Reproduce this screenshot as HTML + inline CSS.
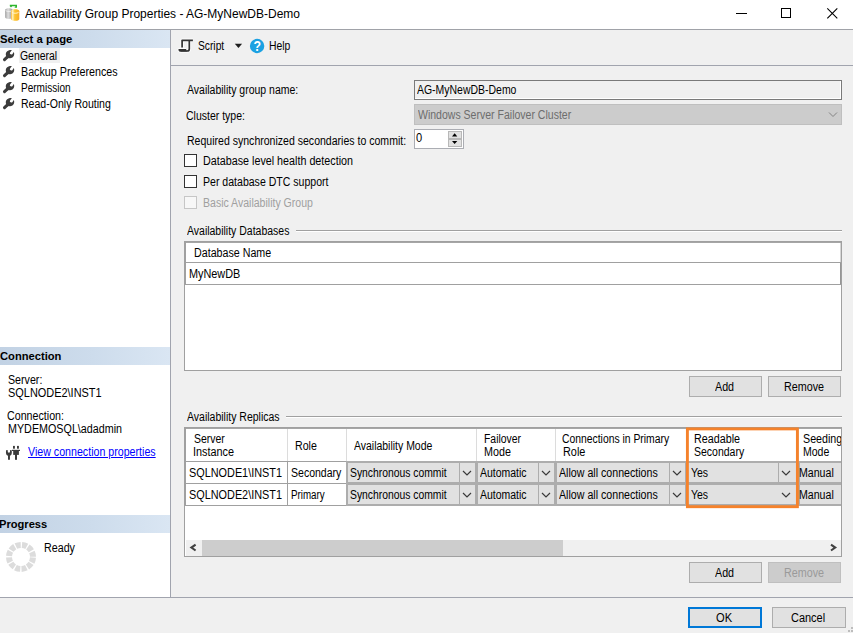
<!DOCTYPE html>
<html lang="en"><head><meta charset="utf-8"><title>Availability Group Properties - AG-MyNewDB-Demo</title>
<style>
html,body{margin:0;padding:0;}
body{width:853px;height:633px;overflow:hidden;background:#f0f0f0;font-family:"Liberation Sans",sans-serif;font-size:12px;line-height:16px;color:#000;}
#win{position:relative;width:853px;height:633px;overflow:hidden;background:#f0f0f0;}
#win div,#win span,#win svg{position:absolute;box-sizing:border-box;}
.t{white-space:pre;transform-origin:0 0;display:block;}
.clip{overflow:hidden;}
.hdr{left:0;width:170px;height:18px;background:linear-gradient(90deg,#c2d2e4 0%,#cddcec 55%,#dae6f3 100%);}
.btn{background:#e1e1e1;border:1px solid #adadad;}
.btn.dis{background:#cccccc;border-color:#bfbfbf;}
.cb{width:13px;height:13px;left:184px;background:#fff;border:1px solid #333;}
.cb.dis{background:#f7f7f7;border-color:#c6c6c6;}
.cell{background:#e1e1e1;}
.vl{width:1px;}
.hl{height:1px;}

</style></head>
<body>
<div id="win">
<!-- title bar -->
<div style="left:0;top:0;width:853px;height:29px;background:#fff"></div>
<div class="hl" style="left:0;top:29px;width:853px;background:#a0a2a8"></div>
<svg style="left:0;top:0" width="24" height="28" viewBox="0 0 24 28">
  <defs>
    <linearGradient id="gg" x1="0" x2="1" y1="0" y2="0"><stop offset="0" stop-color="#a2a2a2"/><stop offset="0.4" stop-color="#dedede"/><stop offset="0.75" stop-color="#b4b4b4"/><stop offset="1" stop-color="#a0a0a0"/></linearGradient>
    <linearGradient id="gy" x1="0" x2="1" y1="0" y2="0"><stop offset="0" stop-color="#f6b430"/><stop offset="0.2" stop-color="#fff2c0"/><stop offset="0.45" stop-color="#fdc530"/><stop offset="1" stop-color="#f8ae26"/></linearGradient>
  </defs>
  <path d="M5.1 9.8 C5.1 7.7 12.7 7.7 12.7 9.8 V17.3 C12.7 19.4 5.1 19.4 5.1 17.3 Z" fill="url(#gg)"/>
  <path d="M5.6 10.6 C7 11.8 10.8 11.8 12.2 10.6" stroke="#f4f4f4" stroke-width="0.8" fill="none"/>
  <path d="M11 11.2 C11 8.7 19.3 8.7 19.3 11.2 V18.9 C19.3 21.5 11 21.5 11 18.9 Z" fill="url(#gy)"/>
  <path d="M11.8 12.3 C13.4 13.6 17 13.6 18.6 12.3" stroke="#fff8dc" stroke-width="0.9" fill="none"/>
  <path d="M9.8 4.8 H17 V7.8 H14.4 L15.6 6.3 H12.2 L11 7.6 L9.8 6.2 Z" fill="#2db52d"/>
</svg>
<!-- window buttons -->
<svg style="left:730px;top:0" width="123" height="29" viewBox="0 0 123 29">
  <path d="M6 13.5 H17" stroke="#000" stroke-width="1" fill="none"/>
  <rect x="51.5" y="8.5" width="9" height="9" stroke="#000" stroke-width="1" fill="none"/>
  <path d="M97.3 8.3 L107.3 18.3 M107.3 8.3 L97.3 18.3" stroke="#000" stroke-width="1.1" fill="none"/>
</svg>

<!-- left panel -->
<div style="left:0;top:30px;width:170px;height:567px;background:#fff"></div>
<div class="vl" style="left:170px;top:30px;height:567px;background:#a1a4ae"></div>
<div class="hdr" style="top:30px"></div>
<div class="hdr" style="top:347px"></div>
<div class="hdr" style="top:515px"></div>
<div style="left:19px;top:48px;width:41px;height:15px;background:#f0f0f0"></div>
<svg style="left:2px;top:49px" width="14" height="62" viewBox="0 0 14 62">
  <defs><g id="wr"><path d="M2.5 10.7 L6 7.3" stroke="#3c3c3c" stroke-width="3" stroke-linecap="round" fill="none"/><path d="M4.3 7.4 C3.4 5.8 3.6 3.5 5.2 2.3 C6.6 1.2 8.4 0.9 9.9 1.1 L8.1 3.5 C7.6 4.3 7.9 5 8.6 5.3 C9.3 5.6 10.1 5.5 10.5 4.9 L11.7 3.1 C12.5 4.5 12.4 6.3 11.4 7.6 C10.3 9 8.4 9.5 6.8 8.9 L5.6 9.6 Z" fill="#3c3c3c"/></g></defs>
  <use href="#wr" y="0"/><use href="#wr" y="16"/><use href="#wr" y="32"/><use href="#wr" y="48"/>
</svg>
<!-- connection icon -->
<svg style="left:4px;top:444px" width="18" height="18" viewBox="4 444 18 18">
  <path d="M6.3 450 L7.6 449.9 L7.9 452.3 Q8.9 453.1 9.9 452.3 L10.2 449.9 L11.5 450 Q12.3 452.5 11.6 454.3 Q10.9 455.6 9.95 455.8 V459.8 H8 V455.8 Q6.9 455.6 6.2 454.3 Q5.5 452.5 6.3 450 Z" fill="#3c3c3c"/>
  <rect x="13" y="445.9" width="1.9" height="2.8" fill="#3c3c3c"/><rect x="17" y="445.9" width="1.9" height="2.8" fill="#3c3c3c"/>
  <rect x="12" y="449.8" width="8" height="1.2" fill="#3c3c3c"/>
  <rect x="13.2" y="450.5" width="5.7" height="4.4" fill="#3c3c3c"/>
  <rect x="15" y="454" width="2" height="5.8" fill="#3c3c3c"/>
</svg>
<!-- progress ring -->
<svg style="left:5px;top:541px" width="32" height="32" viewBox="5 541 32 32">
  <circle cx="21" cy="556.9" r="12" fill="none" stroke="#dcdcdc" stroke-width="6" stroke-dasharray="4.983 1.3" stroke-dashoffset="-0.65"/>
</svg>

<!-- bottom separator -->
<div class="hl" style="left:0;top:597px;width:853px;background:#a1a4ae"></div>

<!-- toolbar -->
<div class="hl" style="left:171px;top:65px;width:682px;background:#a1a4ae"></div>
<svg style="left:176px;top:36px" width="20" height="18" viewBox="176 36 20 18">
  <g fill="none" stroke-linejoin="round">
  <path d="M182.1 47.6 V40.3 H192.9 M189.3 40.3 V49 Q189.3 51 187.2 51 H181 Q179.4 51 179.2 49.8 H186" stroke="#fff" stroke-width="3.6" opacity="0.85"/>
  <path d="M182.1 47.6 V40.3 H192.9 M189.3 40.3 V49 Q189.3 51 187.2 51 H181 Q179.4 51 179.2 49.8 H186" stroke="#333" stroke-width="1.7"/>
  </g>
  <path d="M179.2 49.2 H186.2 Q186.3 51 187.6 51.4 H181 Q179.3 51.3 179.2 49.2 Z" fill="#333"/>
</svg>
<svg style="left:233px;top:42px" width="11" height="8" viewBox="233 42 11 8"><path d="M234.8 43.7 H242.1 L238.45 47.9 Z" fill="#1e1e1e"/></svg>
<svg style="left:248px;top:37px" width="18" height="18" viewBox="248 37 18 18">
  <circle cx="257.1" cy="46" r="7.2" fill="#1ba1e2"/>
  <text x="0" y="51.2" text-anchor="middle" transform="translate(257.2 0) scale(0.86 1)" font-family="Liberation Sans, sans-serif" font-weight="bold" font-size="14.4" fill="#fff">?</text>
</svg>

<!-- form controls -->
<div style="left:414px;top:80px;width:428px;height:20px;background:#f0f0f0;border:1px solid #7a7a7a;box-shadow:inset -1px -1px 0 #fff"></div>
<div style="left:414px;top:104px;width:428px;height:21px;background:#cccccc;border:1px solid #bfbfbf"></div>
<svg style="left:828px;top:111px" width="10" height="7" viewBox="0 0 10 7"><path d="M1 1.5 L5 5.5 L9 1.5" stroke="#838383" stroke-width="1" fill="none"/></svg>
<div style="left:414px;top:129px;width:50px;height:20px;background:#fff;border:1px solid #abadb3"></div>
<div style="left:448px;top:131px;width:14px;height:8px;background:#e1e1e1;border:1px solid #b8b8b8"></div>
<div style="left:448px;top:139px;width:14px;height:8px;background:#e1e1e1;border:1px solid #b8b8b8"></div>
<svg style="left:451px;top:132px" width="8" height="13" viewBox="451 132 8 13"><path d="M452 136.4 L454.65 133.2 L457.3 136.4 Z M452 140.9 L454.65 144 L457.3 140.9 Z" fill="#000"/></svg>
<div class="cb" style="top:154px"></div>
<div class="cb" style="top:175px"></div>
<div class="cb dis" style="top:196px"></div>

<!-- group lines -->
<div class="hl" style="left:296px;top:230px;width:546px;background:#a0a0a0"></div>
<div class="hl" style="left:296px;top:231px;width:546px;background:#fff"></div>
<div class="hl" style="left:286px;top:416px;width:556px;background:#a0a0a0"></div>
<div class="hl" style="left:286px;top:417px;width:556px;background:#fff"></div>

<!-- databases grid -->
<div style="left:184px;top:241px;width:658px;height:130px;background:#fff;border:1px solid #a0a0a0"></div>
<div class="hl" style="left:185px;top:242px;width:656px;background:#a6a6a6"></div>
<div class="vl" style="left:185px;top:242px;height:43px;background:#a0a0a0"></div>
<div class="hl" style="left:186px;top:262px;width:655px;background:#a0a0a0"></div>
<div class="hl" style="left:186px;top:284px;width:655px;background:#a0a0a0"></div>
<div class="vl" style="left:840px;top:243px;height:19px;background:#d6d6d6"></div>
<div style="left:840px;top:263px;width:1px;height:21px;background:#969696"></div>
<div class="btn" style="left:689px;top:376px;width:73px;height:21px"></div>
<div class="btn" style="left:768px;top:376px;width:73px;height:21px"></div>

<!-- replicas grid -->
<div style="left:184px;top:427px;width:658px;height:130px;background:#fff;border:1px solid #a0a0a0"></div>
<div class="hl" style="left:185px;top:428px;width:656px;background:#a6a6a6"></div>
<div class="vl" style="left:185px;top:428px;height:78px;background:#a0a0a0"></div>
<!-- header separators -->
<div class="vl" style="left:287px;top:429px;height:32px;background:#dcdcdc"></div>
<div class="vl" style="left:346px;top:429px;height:32px;background:#dcdcdc"></div>
<div class="vl" style="left:476px;top:429px;height:32px;background:#dcdcdc"></div>
<div class="vl" style="left:555px;top:429px;height:32px;background:#dcdcdc"></div>
<div class="vl" style="left:686px;top:429px;height:32px;background:#dcdcdc"></div>
<div class="vl" style="left:798px;top:429px;height:32px;background:#dcdcdc"></div>
<!-- row lines for text columns -->
<div class="hl" style="left:186px;top:461px;width:161px;background:#a0a0a0"></div>
<div class="hl" style="left:186px;top:483px;width:161px;background:#a0a0a0"></div>
<div class="hl" style="left:186px;top:505px;width:161px;background:#a0a0a0"></div>
<div class="vl" style="left:287px;top:461px;height:45px;background:#a0a0a0"></div>
<!-- combobox band -->
<div style="left:346px;top:461px;width:495px;height:45px;background:#adadad"></div>
<div class="cell" style="left:348px;top:463px;width:127px;height:19px"></div>
<div class="vl" style="left:459px;top:463px;height:19px;background:#adadad"></div>
<svg style="left:462px;top:470px" width="10" height="7" viewBox="0 0 10 7"><path d="M1 1 L5 5 L9 1" stroke="#3a3a3a" stroke-width="1.2" fill="none"/></svg>
<div class="cell" style="left:478px;top:463px;width:76px;height:19px"></div>
<div class="vl" style="left:538px;top:463px;height:19px;background:#adadad"></div>
<svg style="left:541px;top:470px" width="10" height="7" viewBox="0 0 10 7"><path d="M1 1 L5 5 L9 1" stroke="#3a3a3a" stroke-width="1.2" fill="none"/></svg>
<div class="cell" style="left:557px;top:463px;width:128px;height:19px"></div>
<div class="vl" style="left:669px;top:463px;height:19px;background:#adadad"></div>
<svg style="left:672px;top:470px" width="10" height="7" viewBox="0 0 10 7"><path d="M1 1 L5 5 L9 1" stroke="#3a3a3a" stroke-width="1.2" fill="none"/></svg>
<div class="cell" style="left:688px;top:463px;width:109px;height:19px"></div>
<div class="vl" style="left:778px;top:463px;height:19px;background:#adadad"></div>
<svg style="left:781px;top:470px" width="10" height="7" viewBox="0 0 10 7"><path d="M1 1 L5 5 L9 1" stroke="#3a3a3a" stroke-width="1.2" fill="none"/></svg>
<div class="cell" style="left:800px;top:463px;width:41px;height:19px"></div>
<div class="cell" style="left:348px;top:485px;width:127px;height:19px"></div>
<div class="vl" style="left:459px;top:485px;height:19px;background:#adadad"></div>
<svg style="left:462px;top:492px" width="10" height="7" viewBox="0 0 10 7"><path d="M1 1 L5 5 L9 1" stroke="#3a3a3a" stroke-width="1.2" fill="none"/></svg>
<div class="cell" style="left:478px;top:485px;width:76px;height:19px"></div>
<div class="vl" style="left:538px;top:485px;height:19px;background:#adadad"></div>
<svg style="left:541px;top:492px" width="10" height="7" viewBox="0 0 10 7"><path d="M1 1 L5 5 L9 1" stroke="#3a3a3a" stroke-width="1.2" fill="none"/></svg>
<div class="cell" style="left:557px;top:485px;width:128px;height:19px"></div>
<div class="vl" style="left:669px;top:485px;height:19px;background:#adadad"></div>
<svg style="left:672px;top:492px" width="10" height="7" viewBox="0 0 10 7"><path d="M1 1 L5 5 L9 1" stroke="#3a3a3a" stroke-width="1.2" fill="none"/></svg>
<div class="cell" style="left:688px;top:485px;width:109px;height:19px"></div>
<svg style="left:781px;top:492px" width="10" height="7" viewBox="0 0 10 7"><path d="M1 1 L5 5 L9 1" stroke="#3a3a3a" stroke-width="1.2" fill="none"/></svg>
<div class="cell" style="left:800px;top:485px;width:41px;height:19px"></div>
<!-- scrollbar -->
<div style="left:186px;top:540px;width:655px;height:16px;background:#f0f0f0"></div>
<div style="left:202px;top:540px;width:361px;height:16px;background:#cdcdcd"></div>
<svg style="left:188px;top:542px" width="11" height="11" viewBox="188 542 11 11"><path d="M195.6 544.7 L191.4 547.6 L195.6 550.5" stroke="#404040" stroke-width="2.1" fill="none"/></svg>
<svg style="left:827px;top:542px" width="11" height="11" viewBox="827 542 11 11"><path d="M831 544.7 L835.2 547.6 L831 550.5" stroke="#404040" stroke-width="2.1" fill="none"/></svg>
<!-- orange highlight -->
<svg style="left:684px;top:425px" width="118" height="86" viewBox="684 425 118 86"><rect x="687.4" y="428.9" width="110" height="77.8" fill="none" stroke="#f5822b" stroke-width="2.9"/></svg>
<!-- buttons -->
<div class="btn" style="left:689px;top:562px;width:73px;height:21px"></div>
<div class="btn dis" style="left:768px;top:562px;width:73px;height:21px"></div>
<div class="btn" style="left:688px;top:607px;width:74px;height:21px;border:2px solid #0078d7"></div>
<div class="btn" style="left:772px;top:607px;width:74px;height:21px"></div>
<!-- grip -->
<svg style="left:841px;top:621px" width="12" height="12" viewBox="841 621 12 12"><g fill="#bdbdbd"><rect x="851" y="627" width="2" height="2"/><rect x="848" y="630" width="2" height="2"/><rect x="851" y="630" width="2" height="2"/></g></svg>

<span class="t" style="left:24.80px;top:6px;transform:scaleX(0.9991);line-height:16px;color:#000;">Availability Group Properties - AG-MyNewDB-Demo</span>
<span class="t" style="left:-0.37px;top:32px;transform:scaleX(0.9842);font-size:11.5px;line-height:14px;font-weight:bold;">Select a page</span>
<span class="t" style="left:20.36px;top:48px;transform:scaleX(0.8703);line-height:16px;">General</span>
<span class="t" style="left:20.81px;top:64px;transform:scaleX(0.8938);line-height:16px;">Backup Preferences</span>
<span class="t" style="left:20.86px;top:80px;transform:scaleX(0.8364);line-height:16px;">Permission</span>
<span class="t" style="left:20.82px;top:96px;transform:scaleX(0.8798);line-height:16px;">Read-Only Routing</span>
<span class="t" style="left:-0.49px;top:349px;transform:scaleX(0.9710);font-size:11.5px;line-height:14px;font-weight:bold;">Connection</span>
<span class="t" style="left:7.86px;top:372px;transform:scaleX(0.8889);line-height:16px;">Server:</span>
<span class="t" style="left:7.94px;top:385px;transform:scaleX(0.9112);line-height:16px;">SQLNODE2\INST1</span>
<span class="t" style="left:7.44px;top:408px;transform:scaleX(0.8898);line-height:16px;">Connection:</span>
<span class="t" style="left:7.60px;top:421px;transform:scaleX(0.8955);line-height:16px;">MYDEMOSQL\adadmin</span>
<span class="t" style="left:28.19px;top:444px;transform:scaleX(0.8872);line-height:16px;color:#0000ff;text-decoration:underline;">View connection properties</span>
<span class="t" style="left:-0.72px;top:517px;transform:scaleX(0.9666);font-size:11.5px;line-height:14px;font-weight:bold;">Progress</span>
<span class="t" style="left:43.61px;top:540px;transform:scaleX(0.8922);line-height:16px;">Ready</span>
<span class="t" style="left:197.87px;top:38px;transform:scaleX(0.8531);line-height:16px;">Script</span>
<span class="t" style="left:268.64px;top:38px;transform:scaleX(0.8649);line-height:16px;">Help</span>
<span class="t" style="left:187.20px;top:82px;transform:scaleX(0.8745);line-height:16px;">Availability group name:</span>
<span class="t" style="left:186.45px;top:108px;transform:scaleX(0.8747);line-height:16px;">Cluster type:</span>
<span class="t" style="left:186.82px;top:133px;transform:scaleX(0.8784);line-height:16px;">Required synchronized secondaries to commit:</span>
<span class="t" style="left:417.00px;top:82px;transform:scaleX(0.8722);line-height:16px;">AG-MyNewDB-Demo</span>
<span class="t" style="left:418.00px;top:107px;transform:scaleX(0.8768);line-height:16px;color:#6d6d6d;">Windows Server Failover Cluster</span>
<span class="t" style="left:415.94px;top:130px;transform:scaleX(0.9217);line-height:16px;">0</span>
<span class="t" style="left:202.60px;top:153px;transform:scaleX(0.8959);line-height:16px;">Database level health detection</span>
<span class="t" style="left:202.62px;top:174px;transform:scaleX(0.8791);line-height:16px;">Per database DTC support</span>
<span class="t" style="left:202.62px;top:195px;transform:scaleX(0.8777);line-height:16px;color:#a0a0a0;">Basic Availability Group</span>
<span class="t" style="left:187.00px;top:223px;transform:scaleX(0.8737);line-height:16px;">Availability Databases</span>
<span class="t" style="left:193.61px;top:245px;transform:scaleX(0.8905);line-height:16px;">Database Name</span>
<span class="t" style="left:188.59px;top:266px;transform:scaleX(0.9055);line-height:16px;">MyNewDB</span>
<span class="t" style="left:714.90px;top:379px;transform:scaleX(0.8921);line-height:16px;">Add</span>
<span class="t" style="left:783.60px;top:379px;transform:scaleX(0.8974);line-height:16px;">Remove</span>
<span class="t" style="left:187.20px;top:409px;transform:scaleX(0.8750);line-height:16px;">Availability Replicas</span>
<span class="t" style="left:194.06px;top:431px;transform:scaleX(0.8722);line-height:16px;">Server</span>
<span class="t" style="left:193.48px;top:444px;transform:scaleX(0.9029);line-height:16px;">Instance</span>
<span class="t" style="left:294.61px;top:438px;transform:scaleX(0.8865);line-height:16px;">Role</span>
<span class="t" style="left:354.20px;top:438px;transform:scaleX(0.8717);line-height:16px;">Availability Mode</span>
<span class="t" style="left:483.63px;top:431px;transform:scaleX(0.8675);line-height:16px;">Failover</span>
<span class="t" style="left:483.61px;top:444px;transform:scaleX(0.8947);line-height:16px;">Mode</span>
<span class="t" style="left:562.46px;top:431px;transform:scaleX(0.8632);line-height:16px;">Connections in Primary</span>
<span class="t" style="left:562.89px;top:444px;transform:scaleX(0.9081);line-height:16px;">Role</span>
<span class="t" style="left:693.60px;top:431px;transform:scaleX(0.8962);line-height:16px;">Readable</span>
<span class="t" style="left:694.06px;top:444px;transform:scaleX(0.8738);line-height:16px;">Secondary</span>
<div class="clip" style="left:803.05px;top:431px;width:37.95px;height:16px"><span class="t" style="left:0;top:0;line-height:16px;transform:scaleX(0.8912)">Seeding</span></div>
<span class="t" style="left:802.62px;top:444px;transform:scaleX(0.8772);line-height:16px;">Mode</span>
<span class="t" style="left:188.85px;top:465px;transform:scaleX(0.9053);line-height:16px;">SQLNODE1\INST1</span>
<span class="t" style="left:291.06px;top:465px;transform:scaleX(0.8774);line-height:16px;">Secondary</span>
<span class="t" style="left:349.87px;top:465px;transform:scaleX(0.8628);line-height:16px;">Synchronous commit</span>
<span class="t" style="left:480.00px;top:465px;transform:scaleX(0.8717);line-height:16px;">Automatic</span>
<span class="t" style="left:558.60px;top:465px;transform:scaleX(0.8865);line-height:16px;">Allow all connections</span>
<span class="t" style="left:690.78px;top:465px;transform:scaleX(0.8742);line-height:16px;">Yes</span>
<span class="t" style="left:798.92px;top:465px;transform:scaleX(0.8824);line-height:16px;">Manual</span>
<span class="t" style="left:188.85px;top:487px;transform:scaleX(0.9053);line-height:16px;">SQLNODE2\INST1</span>
<span class="t" style="left:291.19px;top:487px;transform:scaleX(0.8149);line-height:16px;">Primary</span>
<span class="t" style="left:349.87px;top:487px;transform:scaleX(0.8628);line-height:16px;">Synchronous commit</span>
<span class="t" style="left:480.00px;top:487px;transform:scaleX(0.8717);line-height:16px;">Automatic</span>
<span class="t" style="left:558.60px;top:487px;transform:scaleX(0.8865);line-height:16px;">Allow all connections</span>
<span class="t" style="left:690.78px;top:487px;transform:scaleX(0.8742);line-height:16px;">Yes</span>
<span class="t" style="left:798.92px;top:487px;transform:scaleX(0.8824);line-height:16px;">Manual</span>
<span class="t" style="left:714.90px;top:565px;transform:scaleX(0.8921);line-height:16px;">Add</span>
<span class="t" style="left:783.60px;top:565px;transform:scaleX(0.8974);line-height:16px;color:#9a9a9a;">Remove</span>
<span class="t" style="left:716.14px;top:610px;transform:scaleX(0.9263);line-height:16px;">OK</span>
<span class="t" style="left:791.03px;top:610px;transform:scaleX(0.9139);line-height:16px;">Cancel</span>
</div>
</body></html>
